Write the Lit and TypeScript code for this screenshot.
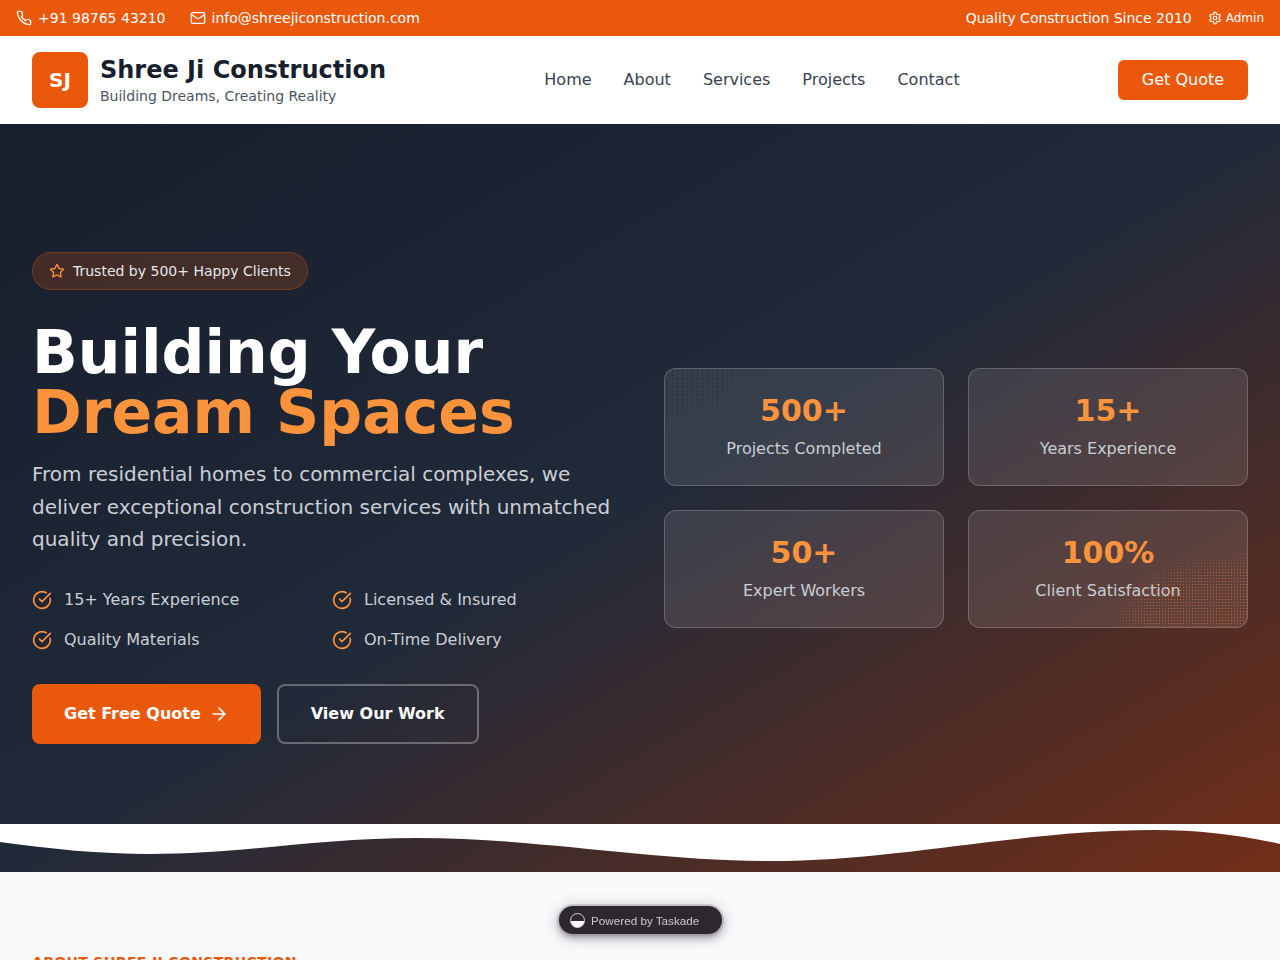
import { LitElement, html, css, svg } from "lit";
import { customElement } from "lit/decorators.js";

const ic = (size: number, body: unknown, cls = "") => html`<svg class=${cls} width=${size} height=${size} viewBox="0 0 24 24" fill="none" stroke="currentColor" stroke-width="2" stroke-linecap="round" stroke-linejoin="round">${body}</svg>`;
const phone = svg`<path d="M22 16.92v3a2 2 0 0 1-2.18 2 19.79 19.79 0 0 1-8.63-3.07 19.5 19.5 0 0 1-6-6 19.79 19.79 0 0 1-3.07-8.67A2 2 0 0 1 4.11 2h3a2 2 0 0 1 2 1.72 12.84 12.84 0 0 0 .7 2.81 2 2 0 0 1-.45 2.11L8.09 9.91a16 16 0 0 0 6 6l1.27-1.27a2 2 0 0 1 2.11-.45 12.84 12.84 0 0 0 2.81.7A2 2 0 0 1 22 16.92z"/>`;
const mail = svg`<rect width="20" height="16" x="2" y="4" rx="2"/><path d="m22 7-8.97 5.7a1.94 1.94 0 0 1-2.06 0L2 7"/>`;
const gear = svg`<path d="M12.22 2h-.44a2 2 0 0 0-2 2v.18a2 2 0 0 1-1 1.73l-.43.25a2 2 0 0 1-2 0l-.15-.08a2 2 0 0 0-2.73.73l-.22.38a2 2 0 0 0 .73 2.73l.15.1a2 2 0 0 1 1 1.72v.51a2 2 0 0 1-1 1.74l-.15.09a2 2 0 0 0-.73 2.73l.22.38a2 2 0 0 0 2.73.73l.15-.08a2 2 0 0 1 2 0l.43.25a2 2 0 0 1 1 1.73V20a2 2 0 0 0 2 2h.44a2 2 0 0 0 2-2v-.18a2 2 0 0 1 1-1.73l.43-.25a2 2 0 0 1 2 0l.15.08a2 2 0 0 0 2.73-.73l.22-.39a2 2 0 0 0-.73-2.73l-.15-.08a2 2 0 0 1-1-1.74v-.5a2 2 0 0 1 1-1.74l.15-.09a2 2 0 0 0 .73-2.73l-.22-.38a2 2 0 0 0-2.73-.73l-.15.08a2 2 0 0 1-2 0l-.43-.25a2 2 0 0 1-1-1.73V4a2 2 0 0 0-2-2z"/><circle cx="12" cy="12" r="3"/>`;
const star = svg`<polygon points="12 2 15.09 8.26 22 9.27 17 14.14 18.18 21.02 12 17.77 5.82 21.02 7 14.14 2 9.27 8.91 8.26 12 2"/>`;
const check = svg`<path d="M21.801 10A10 10 0 1 1 17 3.335"/><path d="m9 11 3 3L22 4"/>`;
const arrow = svg`<path d="M5 12h14"/><path d="m12 5 7 7-7 7"/>`;

const features = ["15+ Years Experience", "Licensed & Insured", "Quality Materials", "On-Time Delivery"];
const stats = [
  ["500+", "Projects Completed", "dark-dots"],
  ["15+", "Years Experience", ""],
  ["50+", "Expert Workers", ""],
  ["100%", "Client Satisfaction", "warm-dots"],
];
const nav = ["Home", "About", "Services", "Projects", "Contact"];

@customElement("app-root")
export class AppRoot extends LitElement {
  static styles = css`
    :host { display: block; height: 960px; overflow: hidden; position: relative; font-family: "DejaVu Sans", sans-serif; background: #f9fafb; }
    * { box-sizing: border-box; }
    svg { display: block; flex: none; }
    .top { height: 36px; background: #ea580c; color: #fff; font-size: 14px; display: flex; align-items: center; justify-content: space-between; padding: 0 16px; }
    .top-group { display: flex; align-items: center; gap: 24px; }
    .top-item { display: flex; align-items: center; gap: 6px; }
    .top-right { gap: 16px; }
    .admin { display: flex; align-items: center; gap: 4px; font-size: 12px; }
    .head { height: 88px; background: #fff; display: flex; align-items: center; justify-content: space-between; padding: 0 32px; }
    .brand { display: flex; align-items: center; gap: 12px; }
    .logo { width: 56px; height: 56px; border-radius: 8px; background: #ea580c; color: #fff; font-weight: 700; font-size: 20px; display: flex; align-items: center; justify-content: center; }
    .title { font-size: 24px; line-height: 32px; font-weight: 700; color: #171e2c; }
    .sub { font-size: 14px; line-height: 20px; color: #4b5563; }
    .nav { display: flex; gap: 32px; font-size: 16px; line-height: 24px; color: #374151; }
    .quote { width: 130px; height: 40px; border-radius: 6px; background: #ea580c; color: #fff; font-size: 16px; line-height: 24px; display: flex; align-items: center; justify-content: center; }
    .hero { height: 748px; position: relative; background: linear-gradient(to bottom right, #171e2c 0%, #212a39 50%, #722e17 100%); display: grid; grid-template-columns: 584px 584px; gap: 48px; padding: 0 32px; align-items: center; }
    .badge { display: inline-flex; align-items: center; gap: 8px; height: 38px; padding: 0 16px; border-radius: 999px; background: rgba(234, 88, 12, 0.2); border: 1px solid rgba(234, 88, 12, 0.3); color: #e5e7eb; font-size: 14px; }
    .badge svg { color: #fb923c; }
    h1 { margin: 32px 0 0; font-size: 60px; line-height: 60px; font-weight: 700; color: #fff; }
    h1 span { display: block; color: #fb923c; }
    .lead { margin: 16px 0 0; font-size: 20px; line-height: 32.5px; color: #cbced5; }
    .feats { margin-top: 32px; display: grid; grid-template-columns: 1fr 1fr; gap: 16px; }
    .feat { display: flex; align-items: center; gap: 12px; color: #cbced5; font-size: 16px; height: 24px; }
    .feat svg { color: #fb923c; }
    .btns { margin-top: 32px; display: flex; gap: 16px; }
    .btn { height: 60px; border-radius: 8px; display: flex; align-items: center; gap: 8px; padding: 0 32px; font-size: 16px; font-weight: 700; color: #fff; }
    .primary { background: #ea580c; }
    .ghost { border: 2px solid rgba(255, 255, 255, 0.3); }
    .stats { display: grid; grid-template-columns: 1fr 1fr; gap: 24px; }
    .stat { position: relative; overflow: hidden; height: 118px; border-radius: 12px; border: 1px solid rgba(255, 255, 255, 0.2); background: rgba(255, 255, 255, 0.1); display: flex; flex-direction: column; align-items: center; padding-top: 24px; }
    .dark-dots::after, .warm-dots::after { content: ""; position: absolute; inset: 0; pointer-events: none; }
    .dark-dots::after { background-image: radial-gradient(circle, rgba(25, 30, 42, 0.5) 0.5px, transparent 0.9px); background-size: 5px 4px; -webkit-mask-image: radial-gradient(ellipse 120px 70px at 0 0, #000 30%, transparent 100%); mask-image: radial-gradient(ellipse 120px 70px at 0 0, #000 30%, transparent 100%); }
    .warm-dots::after { background-image: radial-gradient(circle, rgba(234, 110, 40, 0.7) 0.7px, transparent 1px); background-size: 3px 3px; -webkit-mask-image: radial-gradient(ellipse 145px 80px at 100% 100%, #000 70%, transparent 100%); mask-image: radial-gradient(ellipse 145px 80px at 100% 100%, #000 70%, transparent 100%); }
    .num { font-size: 30px; line-height: 36px; font-weight: 700; color: #fb923c; }
    .lab { margin-top: 8px; font-size: 16px; line-height: 24px; color: #cbced5; }
    .wave { position: absolute; left: 0; bottom: 0; }
    .about { padding: 80px 32px 0; color: #ea580c; font-size: 14px; font-weight: 700; letter-spacing: 0.35px; line-height: 20px; }
    .pill { position: absolute; left: 559px; top: 906px; width: 163px; height: 28px; border-radius: 14px; background: #2e2730; display: flex; align-items: center; gap: 6px; padding-left: 11px; font-family: "Liberation Sans", Arial, sans-serif; font-size: 11.7px; color: #c9c9ce; box-shadow: 0 0 0 2px rgba(130, 130, 140, 0.3), 0 4px 6px rgba(70, 70, 80, 0.4), 0 2px 14px 4px rgba(120, 120, 130, 0.28); filter: blur(0.6px); }
    .dot { width: 15px; height: 15px; border-radius: 50%; border: 1.5px solid #d0d0d4; background: radial-gradient(circle at 50% 20%, #fff 58%, transparent 60%) 0 7px / 100% 100% no-repeat, #2e2730; }
  `;

  render() {
    return html`
      <div class="top">
        <div class="top-group">
          <div class="top-item">${ic(16, phone)}<span>+91 98765 43210</span></div>
          <div class="top-item">${ic(16, mail)}<span>info@shreejiconstruction.com</span></div>
        </div>
        <div class="top-group top-right">
          <span>Quality Construction Since 2010</span>
          <div class="admin">${ic(14, gear)}<span>Admin</span></div>
        </div>
      </div>
      <div class="head">
        <div class="brand">
          <div class="logo">SJ</div>
          <div>
            <div class="title">Shree Ji Construction</div>
            <div class="sub">Building Dreams, Creating Reality</div>
          </div>
        </div>
        <div class="nav">${nav.map((n) => html`<span>${n}</span>`)}</div>
        <div class="quote">Get Quote</div>
      </div>
      <div class="hero">
        <div>
          <div class="badge">${ic(16, star)}<span>Trusted by 500+ Happy Clients</span></div>
          <h1>Building Your<span>Dream Spaces</span></h1>
          <p class="lead">From residential homes to commercial complexes, we deliver exceptional construction services with unmatched quality and precision.</p>
          <div class="feats">${features.map((f) => html`<div class="feat">${ic(20, check)}<span>${f}</span></div>`)}</div>
          <div class="btns">
            <div class="btn primary"><span>Get Free Quote</span>${ic(20, arrow)}</div>
            <div class="btn ghost">View Our Work</div>
          </div>
        </div>
        <div class="stats">${stats.map(([n, l, c]) => html`<div class="stat ${c}"><div class="num">${n}</div><div class="lab">${l}</div></div>`)}</div>
        <svg class="wave" width="1280" height="48" viewBox="0 0 1280 48"><path fill="#fff" d="M0,18 C50,25 100,30 150,30 C240,30 320,14 416,14 C540,14 650,37 770,37 C900,37 1020,6 1154,6 C1200,6 1240,11 1280,20 L1280,0 L0,0 Z"/></svg>
      </div>
      <div class="about">ABOUT SHREE JI CONSTRUCTION</div>
      <div class="pill"><div class="dot"></div><span>Powered by Taskade</span></div>
    `;
  }
}
